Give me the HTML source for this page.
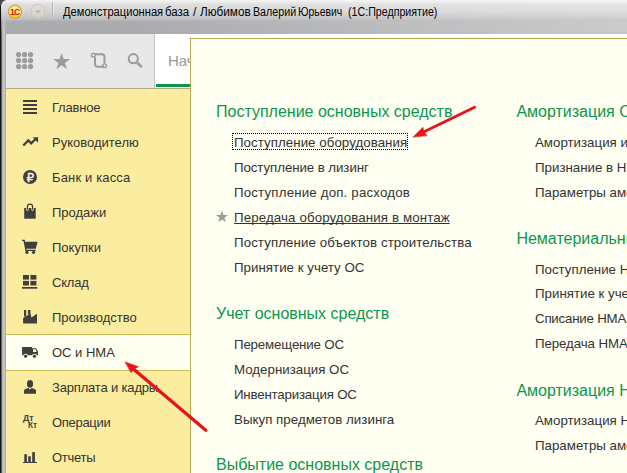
<!DOCTYPE html>
<html lang="ru"><head><meta charset="utf-8">
<title>1С:Предприятие</title>
<style>
*{box-sizing:border-box;margin:0;padding:0}
html,body{width:627px;height:473px;overflow:hidden;background:#fff}
body{position:relative;font-family:"Liberation Sans",Arial,sans-serif;color:#333}
.abs{position:absolute}
#title{left:0;top:0;width:627px;height:34px;background:linear-gradient(90deg,rgba(255,255,255,0) 0,rgba(255,255,255,0) 150px,rgba(255,255,255,.22) 627px),linear-gradient(#f3f3f3 0,#ececec 2px,#dfdfdf 4px,#d4d4d4 12px,#c6c6c7 17px,#bcbcbe 20px,#acadb0 21px,#a9aaad 34px)}
#title2{left:0;top:21px;width:627px;height:13px;background:linear-gradient(90deg,rgba(255,255,255,0) 0,rgba(255,255,255,0) 120px,rgba(255,255,255,.2) 627px)}
#ttext{left:0;top:5px;font-size:12px;line-height:15px;color:#000;white-space:pre}
#ttext span{position:absolute;top:0;display:block;transform-origin:0 0}
#lb0{left:0;top:0;width:2px;height:473px;background:linear-gradient(90deg,#111 0,#111 1px,#666 1px,#666 2px)}
#lb1{left:2px;top:0;width:4px;height:473px;background:linear-gradient(90deg,#b2b2b2 0,#b2b2b2 1px,#c6c6c6 1px,#c6c6c6 2px,#c1c1c1 2px,#c1c1c1 3px,#acacac 3px,#acacac 4px)}
#tool{left:6px;top:34px;width:148px;height:54px;background:#e8e8e8}
#sep{left:6px;top:88px;width:184px;height:1px;background:#b3aa86}
#tabs{left:154px;top:34px;width:473px;height:54px;background:#fff;border-left:1px solid #c4c4c4}
#tabul{left:156px;top:84px;width:40px;height:3px;background:#0b9647}
#tabtx{left:168px;top:52px;font-size:15px;line-height:18px;color:#9a9a9a}
#side{left:6px;top:88px;width:184px;height:385px;background:#fbed9f}
.it{position:absolute;left:0;width:184px;height:35px;font-size:13px;line-height:35px;padding-left:46px;color:#333;white-space:nowrap}
.it.sel{background:#fffff0;height:37px;border-top:1px solid #cdbb58;border-bottom:1px solid #cdbb58}
.it svg{position:absolute;left:14px;top:8px;width:20px;height:20px}
#panel{left:190px;top:38px;width:440px;height:440px;background:#fffff2;border:1px solid #b9a955}
.h{position:absolute;font-size:16px;line-height:20px;color:#0d9650;white-space:nowrap}
.l{position:absolute;font-size:13.3px;line-height:16px;color:#333;white-space:nowrap;letter-spacing:.12px}
.u{text-decoration:underline;text-decoration-skip-ink:none}
</style></head><body>
<div id="title" class="abs"></div><div id="title2" class="abs"></div>
<div id="lb0" class="abs"></div><div id="lb1" class="abs"></div>
<div class="abs" style="left:1px;top:0;width:5px;height:34px;background:linear-gradient(#e4e6e8 0,#d6d8da 10px,rgba(185,186,188,.6) 22px,rgba(176,176,176,0) 34px)"></div>
<div id="ttext" class="abs"><span style="left:63px;transform:scaleX(0.928)">Демонстрационная</span> <span style="left:164.8px;transform:scaleX(0.95)">база</span> <span style="left:193px;transform:scaleX(1)">/</span> <span style="left:200px;transform:scaleX(0.98)">Любимов</span> <span style="left:252.6px;transform:scaleX(0.89)">Валерий</span> <span style="left:297.8px;transform:scaleX(0.865)">Юрьевич</span> <span style="left:348.2px;transform:scaleX(0.888)">(1С:Предприятие)</span></div>
<div id="tool" class="abs"></div>
<div id="tabs" class="abs"></div>
<div id="tabul" class="abs"></div>
<div id="tabtx" class="abs">Начальная страница</div>
<div id="side" class="abs">
<div class="it" style="top:2px;letter-spacing:-0.2px">Главное</div>
<div class="it" style="top:37px">Руководителю</div>
<div class="it" style="top:72px;letter-spacing:0.15px">Банк и касса</div>
<div class="it" style="top:107px">Продажи</div>
<div class="it" style="top:142px">Покупки</div>
<div class="it" style="top:177px;letter-spacing:-0.2px">Склад</div>
<div class="it" style="top:212px">Производство</div>
<div class="it sel" style="top:246px">ОС и НМА</div>
<div class="it" style="top:282px;letter-spacing:-0.17px">Зарплата и кадры</div>
<div class="it" style="top:317px;letter-spacing:-0.3px">Операции</div>
<div class="it" style="top:352px;letter-spacing:-0.28px">Отчеты</div>
</div>
<div id="sep" class="abs"></div>
<div id="panel" class="abs"></div>
<div class="abs" style="left:232px;top:133px;width:176px;height:17px;border:1px dotted #000"></div>
<div class="h" style="left:216px;top:102px">Поступление основных средств</div>
<div class="l" style="left:234px;top:135px;letter-spacing:0.05px">Поступление оборудования</div>
<div class="l" style="left:234px;top:160px;letter-spacing:-0.08px">Поступление в лизинг</div>
<div class="l" style="left:234px;top:185px;letter-spacing:0.17px">Поступление доп. расходов</div>
<div class="l u" style="left:234px;top:210px">Передача оборудования в монтаж</div>
<div class="l" style="left:234px;top:235px;letter-spacing:0.09px">Поступление объектов строительства</div>
<div class="l" style="left:234px;top:260px;letter-spacing:0.02px">Принятие к учету ОС</div>
<div class="h" style="left:216px;top:304px">Учет основных средств</div>
<div class="l" style="left:234px;top:337px;letter-spacing:-0.17px">Перемещение ОС</div>
<div class="l" style="left:234px;top:362px;letter-spacing:0.00px">Модернизация ОС</div>
<div class="l" style="left:234px;top:387px;letter-spacing:-0.20px">Инвентаризация ОС</div>
<div class="l" style="left:234px;top:412px;letter-spacing:0.03px">Выкуп предметов лизинга</div>
<div class="h" style="left:216px;top:455px">Выбытие основных средств</div>
<div class="h" style="left:516.4px;top:102px">Амортизация ОС</div>
<div class="l" style="left:535px;top:135px;letter-spacing:0">Амортизация и износ ОС</div>
<div class="l" style="left:535px;top:160px;letter-spacing:0">Признание в НУ лизинговых платежей</div>
<div class="l" style="left:535px;top:185px;letter-spacing:0">Параметры амортизации ОС</div>
<div class="h" style="left:516.4px;top:229px">Нематериальные активы</div>
<div class="l" style="left:535px;top:262px;letter-spacing:0">Поступление НМА</div>
<div class="l" style="left:535px;top:286px;letter-spacing:0">Принятие к учету НМА</div>
<div class="l" style="left:535px;top:311px;letter-spacing:-.22px">Списание НМА</div>
<div class="l" style="left:535px;top:336px;letter-spacing:-.1px">Передача НМА</div>
<div class="h" style="left:516.4px;top:381px">Амортизация НМА</div>
<div class="l" style="left:535px;top:413px;letter-spacing:0">Амортизация НМА</div>
<div class="l" style="left:535px;top:438px;letter-spacing:0">Параметры амортизации НМА</div>

<svg class="abs" id="ov" style="left:0;top:0" width="627" height="473" viewBox="0 0 627 473">
<!-- title bar icons -->
<defs>
<linearGradient id="g1c" x1="0" y1="0" x2="0" y2="1"><stop offset="0" stop-color="#ffe27a"/><stop offset=".45" stop-color="#fff0a8"/><stop offset=".75" stop-color="#ffdc30"/><stop offset="1" stop-color="#ffd000"/></linearGradient>
<linearGradient id="gbt" x1="0" y1="0" x2="0" y2="1"><stop offset="0" stop-color="#e4e1da"/><stop offset="1" stop-color="#d2cfc7"/></linearGradient>
</defs>
<path d="M0 0h6q-4 .800-4.900 5.500h-1.100z" fill="#4a4a4a"/>
<circle cx="15" cy="11.700" r="6.500" fill="url(#g1c)" stroke="#d9a13a" stroke-width="1.300"/>
<text x="14.800" y="14.800" font-family="Liberation Sans, sans-serif" font-weight="bold" font-size="8.600" fill="#c8180c" text-anchor="middle" letter-spacing="-0.700">1С</text>
<circle cx="38" cy="11.5" r="7" fill="url(#gbt)" stroke="#c9c6be" stroke-width="1"/>
<path d="M35 10.3h6l-3 3.2z" fill="#b9b5ab"/>
<rect x="52" y="2" width="1" height="13" fill="#b4b4b4"/><rect x="53" y="2" width="1" height="13" fill="#f2f2f2" opacity=".7"/>
<!-- toolbar icons -->
<g fill="#9b9b9b">
<circle cx="18.6" cy="54.6" r="2.6"/><circle cx="24.6" cy="54.6" r="2.6"/><circle cx="30.6" cy="54.6" r="2.6"/>
<circle cx="18.6" cy="60.6" r="2.6"/><circle cx="24.6" cy="60.6" r="2.6"/><circle cx="30.6" cy="60.6" r="2.6"/>
<circle cx="18.6" cy="66.6" r="2.6"/><circle cx="24.6" cy="66.6" r="2.6"/><circle cx="30.6" cy="66.6" r="2.6"/>
<path d="M61.65 52.90L63.67 59.12L70.21 59.12L64.92 62.96L66.94 69.18L61.65 65.34L56.36 69.18L58.38 62.96L53.09 59.12L59.63 59.12z"/>
</g>
<g fill="none" stroke="#9b9b9b" stroke-width="1.8">
<path d="M94.600 54.300h7.200a2.700 2.700 0 0 1 2.700 2.700v6.600" stroke-width="2"/>
<path d="M95 57.200v6.800a2.700 2.700 0 0 0 2.700 2.700h5.300" stroke-width="2"/>
<circle cx="93.300" cy="55.200" r="1.800" stroke-width="1.400" fill="#e8e8e8"/>
<circle cx="104.700" cy="65.700" r="1.800" stroke-width="1.400" fill="#e8e8e8"/>
<circle cx="133.3" cy="58.7" r="4.6" stroke-width="2"/>
<path d="M137.2 62.8l4.6 4.2" stroke-width="2.8"/>
</g>
<!-- sidebar icons -->
<g fill="#3f3f3f">
<rect x="23" y="100" width="14" height="2"/><rect x="23" y="104" width="14" height="2"/><rect x="23" y="108" width="14" height="2"/><rect x="23" y="112" width="14" height="2"/>
<path d="M23.300 145.500l5-5 2.900 2.900 4.600-4.600" fill="none" stroke="#3f3f3f" stroke-width="2.300"/><path d="M32.600 137.200h5.500v5.500z"/>
<circle cx="30" cy="177" r="7"/>
<rect x="24.200" y="208" width="11.500" height="10.700"/>
<path d="M22 239.800h2.700l.400 2h12.500l-1.800 6.900h-9.500l.200 1h9.200v1.200h-10.300l-1.900-9.900h-1.500z"/>
<circle cx="26.900" cy="252.300" r="1.600"/><circle cx="33.600" cy="252.300" r="1.600"/>
<rect x="23" y="275" width="6" height="4.600"/><rect x="30.400" y="275" width="6" height="4.600"/><rect x="23" y="280.900" width="6" height="4.600"/><rect x="30.400" y="280.900" width="6" height="4.600"/><rect x="22" y="287" width="15.200" height="1.700"/>
<path d="M23.100 323.600v-5.600l7.400-4.600.900 4 5.600-3.600v9.800z"/><rect x="24" y="310" width="2.200" height="6.500"/><rect x="27.900" y="310" width="2.500" height="4.500"/>
<path d="M22.100 347.100h9.900v1.100h3.200q1 0 1.600 1.200l1.200 2.400v3.400h-15.900z"/>
<ellipse cx="30" cy="383.800" rx="3.100" ry="3.900"/>
<path d="M24 393.700v-2.800q0-1.400 1.500-1.900l2.800-.9 1.700 1.300 1.700-1.300 2.800.9q1.500.5 1.500 1.900v2.800z"/>
<rect x="24.300" y="454.200" width="2.600" height="8"/><rect x="28.200" y="456.300" width="2.600" height="6"/><rect x="32.200" y="452.100" width="2.700" height="10"/><rect x="23" y="462" width="14" height="1"/>
</g>
<path d="M27.400 208v1.400M32.600 208v1.400" fill="none" stroke="#fbed9f" stroke-width="2.500" stroke-linecap="round"/><path d="M27.400 209.800v-3a2.600 2.600 0 0 1 5.200 0v3" fill="none" stroke="#3f3f3f" stroke-width="1.250"/>
<path d="M33.200 349.200h2.400l1 2.700h-3.400z" fill="#fffff0"/><circle cx="25.600" cy="356.100" r="2.400" fill="#fffff0"/><circle cx="34.500" cy="356.100" r="2.400" fill="#fffff0"/><circle cx="25.600" cy="356.200" r="1.600" fill="#3f3f3f"/><circle cx="34.500" cy="356.200" r="1.600" fill="#3f3f3f"/>
<text x="30.300" y="181.800" font-family="Liberation Sans, DejaVu Sans, sans-serif" font-size="12" fill="#fff8d2" stroke="#fff8d2" stroke-width=".350" text-anchor="middle">₽</text>
<text x="23" y="420.500" font-family="Liberation Sans, sans-serif" font-weight="bold" font-size="8.800" fill="#3f3f3f">Дт</text>
<text x="28" y="428.400" font-family="Liberation Sans, sans-serif" font-weight="bold" font-size="8.300" fill="#3f3f3f">Кт</text>
<!-- favourite star -->
<path d="M222 210.600l1.500 4.300 4.600.1-3.660 2.780 1.330 4.400-3.770-2.620-3.770 2.620 1.330-4.400-3.660-2.780 4.600-.1z" fill="#9b9b9b"/>
<!-- focus rect -->

<!-- arrows -->
<g stroke="#e8121a" fill="#e8121a" stroke-linecap="round">
<path d="M474.600 107.200L422 132.700" stroke-width="2.800" fill="none"/>
<path d="M413.200 137l9.700-9.700 .9 4.500 3.100 3.600z" stroke-width=".6" stroke-linejoin="round"/>
<path d="M205.800 430.300L134 369.400" stroke-width="3.300" fill="none"/>
<path d="M125.200 361.900l13.300 4.900-4.300 2.300-3 3.400z" stroke-width=".6" stroke-linejoin="round"/>
</g>
</svg>
</body></html>
